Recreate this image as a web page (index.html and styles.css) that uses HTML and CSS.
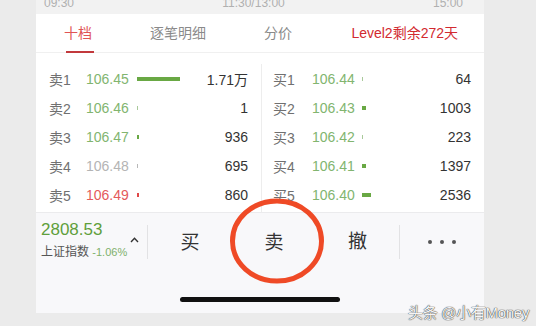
FILE: index.html
```html
<!DOCTYPE html>
<html lang="zh">
<head>
<meta charset="utf-8">
<link rel="stylesheet" href="styles.css">
</head>
<body>
<div class="phone">
  <div class="axis">
    <div class="axis-inner"><span>09:30</span><span>11:30/13:00</span><span>15:00</span></div>
  </div>
  <div class="tabs">
    <span class="tab active">十档</span>
    <span class="tab">逐笔明细</span>
    <span class="tab">分价</span>
    <span class="tab level">Level2剩余272天</span>
  </div>
  <div class="book">
    <div class="side sell">
      <div class="row"><span class="lbl">卖1</span><span class="px green">106.45</span><span class="bar-cell"><i class="bar g" style="width:43px"></i></span><span class="qty">1.71万</span></div>
      <div class="row"><span class="lbl">卖2</span><span class="px green">106.46</span><span class="bar-cell"><i class="bar lg" style="width:1px"></i></span><span class="qty">1</span></div>
      <div class="row"><span class="lbl">卖3</span><span class="px green">106.47</span><span class="bar-cell"><i class="bar g" style="width:2px"></i></span><span class="qty">936</span></div>
      <div class="row"><span class="lbl">卖4</span><span class="px gray">106.48</span><span class="bar-cell"><i class="bar gr" style="width:1px"></i></span><span class="qty">695</span></div>
      <div class="row"><span class="lbl">卖5</span><span class="px red">106.49</span><span class="bar-cell"><i class="bar r" style="width:2px"></i></span><span class="qty">860</span></div>
    </div>
    <div class="side buy">
      <div class="row"><span class="lbl">买1</span><span class="px green">106.44</span><span class="bar-cell"><i class="bar lg" style="width:1px"></i></span><span class="qty">64</span></div>
      <div class="row"><span class="lbl">买2</span><span class="px green">106.43</span><span class="bar-cell"><i class="bar g" style="width:4px"></i></span><span class="qty">1003</span></div>
      <div class="row"><span class="lbl">买3</span><span class="px green">106.42</span><span class="bar-cell"><i class="bar lg" style="width:1px"></i></span><span class="qty">223</span></div>
      <div class="row"><span class="lbl">买4</span><span class="px green">106.41</span><span class="bar-cell"><i class="bar g" style="width:4px"></i></span><span class="qty">1397</span></div>
      <div class="row"><span class="lbl">买5</span><span class="px green">106.40</span><span class="bar-cell"><i class="bar g" style="width:9px"></i></span><span class="qty">2536</span></div>
    </div>
  </div>
  <div class="bottom">
    <div class="actions">
      <div class="index">
        <div class="idx-text">
          <div class="idx-val">2808.53</div>
          <div class="idx-name">上证指数 <span class="idx-chg">-1.06%</span></div>
        </div>
        <svg class="caret" width="9" height="6" viewBox="0 0 9 6"><path d="M1 5 L4.5 1.3 L8 5" fill="none" stroke="#333" stroke-width="1.4"/></svg>
      </div>
      <div class="act">买</div>
      <div class="act sell-act">卖
        <svg class="ring" width="100" height="92" viewBox="0 0 100 92"><ellipse cx="50" cy="46" rx="44.5" ry="40" fill="none" stroke="#ef4a26" stroke-width="5"/></svg>
      </div>
      <div class="act">撤</div>
      <div class="more"><i></i><i></i><i></i></div>
    </div>
    <div class="home-bar"></div>
  </div>
</div>
<div class="watermark">头条 @小有Money</div>
</body>
</html>
```
FILE: styles.css
```css
* { box-sizing: border-box; }
html, body { margin: 0; padding: 0; }
body {
  background: #ebebeb;
  width: 536px;
  height: 326px;
  overflow: hidden;
  font-family: "Liberation Sans", "Noto Sans CJK SC", sans-serif;
  position: relative;
}
.phone {
  width: 448px;
  margin-left: 36px;
  height: 313px;
  background: #fff;
  display: flex;
  flex-direction: column;
}
.axis {
  height: 14px;
  background: #f2f2f2;
  overflow: hidden;
}
.axis-inner {
  margin-top: -4px;
  display: flex;
  justify-content: space-between;
  padding: 0 21px 0 8px;
  font-size: 12px;
  line-height: 14px;
  color: #b0b0b0;
}
.tabs {
  height: 39px;
  border-bottom: 1px solid #f0f0f0;
  display: flex;
  align-items: stretch;
  padding-left: 28px;
  font-size: 14px;
  line-height: 38px;
  color: #8a8a8a;
}
.tab { position: relative; margin-right: 58px; }
.tab:nth-child(3) { margin-right: 0; }
.tab.active { color: #e05455; }
.tab.active::after {
  content: "";
  position: absolute;
  left: 2px;
  right: -2px;
  bottom: -1px;
  height: 2px;
  background: #c2393c;
}
.tab.level { margin-left: auto; margin-right: 26px; color: #d22a30; }
.book {
  height: 159px;
  display: flex;
  padding-top: 11px;
}
.side {
  width: 225px;
  display: flex;
  flex-direction: column;
  padding: 0 13px;
}
.side.buy {
  width: 223px;
  border-left: 1px solid #ededed;
  padding-left: 11px;
}
.row {
  height: 29px;
  display: flex;
  align-items: center;
  font-size: 14px;
}
.lbl { width: 37px; color: #707070; }
.buy .lbl { width: 39px; }
.px { width: 51px; }
.buy .px { width: 50px; }
.green { color: #82b56f; }
.gray { color: #b4b4b4; }
.red { color: #e45a5c; }
.bar-cell { flex: 1; display: flex; align-items: center; }
.bar { display: block; height: 4px; }
.bar.g { background: #69a844; }
.bar.lg { background: #a9c99a; }
.bar.gr { background: #b8b8b8; }
.bar.r { background: #e04848; }
.qty { color: #333; text-align: right; }
.bottom {
  flex: 1;
  background: #f8f8fa;
  border-top: 1px solid #ebebed;
  display: flex;
  flex-direction: column;
  align-items: center;
}
.actions {
  width: 100%;
  height: 58px;
  display: flex;
  align-items: center;
}
.index {
  width: 112px;
  height: 34px;
  border-right: 1px solid #e2e2e4;
  display: flex;
  align-items: center;
  padding-left: 5px;
}
.idx-text { display: flex; flex-direction: column; margin-top: -4px; }
.idx-val { font-size: 17px; line-height: 20px; color: #5f9f3c; }
.idx-name { font-size: 12px; line-height: 16px; color: #555; white-space: nowrap; margin-top: 4px; }
.idx-chg { font-size: 11px; color: #7fb06a; }
.caret { margin-left: 3px; margin-top: -5px; }
.act {
  width: 84px;
  text-align: center;
  font-size: 19px;
  color: #333;
  position: relative;
  line-height: 24px;
  margin-top: 2px;
}
.act:nth-child(4) { border-right: 1px solid #e2e2e4; height: 34px; line-height: 34px; margin-top: 0; }
.act:nth-child(4) { padding-top: 0; }
.ring {
  position: absolute;
  left: 50%;
  top: 50%;
  margin-left: -47px;
  margin-top: -48px;
}
.more {
  flex: 1;
  display: flex;
  justify-content: center;
  gap: 8px;
  padding-right: 1px;
}
.more i { width: 4px; height: 4px; border-radius: 50%; background: #555; display: block; }
.home-bar {
  margin-top: 26px;
  width: 160px;
  height: 5px;
  border-radius: 3px;
  background: #111;
}
.watermark {
  position: absolute;
  left: 408px;
  top: 303px;
  font-size: 15px;
  line-height: 20px;
  color: #f4f4f4;
  text-shadow: 0 0 1px #333, 0 0 1px #333;
  letter-spacing: -0.3px;
}
```
